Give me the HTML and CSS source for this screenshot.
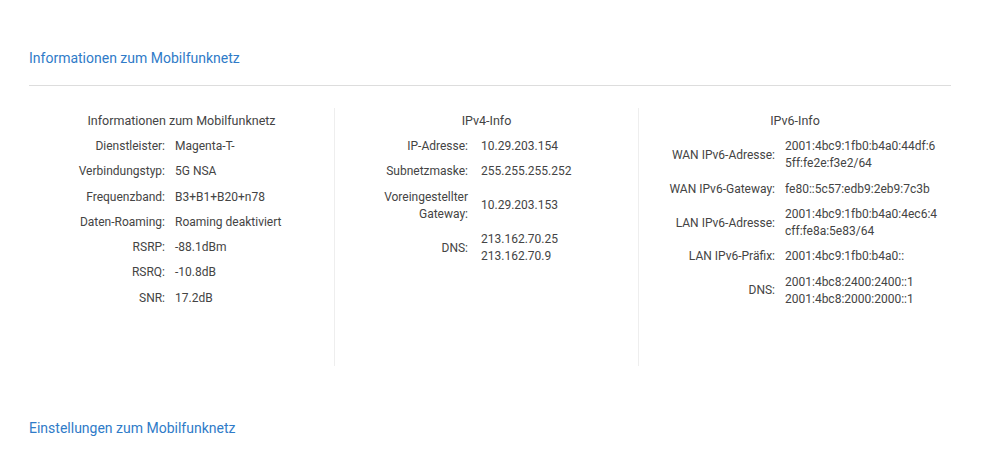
FILE: index.html
```html
<!DOCTYPE html>
<html lang="de">
<head>
    <meta charset="UTF-8" />
    <title>Mobilfunknetz</title>
    <link rel="stylesheet" href="styles.css">
</head>
<body>
    <main class="seite">
        <section class="bereich">
            <h2 class="bereich-titel">Informationen zum Mobilfunknetz</h2>
            <div class="info-raster">
                <div class="info-spalte">
                    <h3>Informationen zum Mobilfunknetz</h3>
                    <dl class="info-liste">
                        <dt>Dienstleister:</dt><dd>Magenta-T-</dd>
                        <dt>Verbindungstyp:</dt><dd>5G NSA</dd>
                        <dt>Frequenzband:</dt><dd>B3+B1+B20+n78</dd>
                        <dt>Daten-Roaming:</dt><dd>Roaming deaktiviert</dd>
                        <dt>RSRP:</dt><dd>-88.1dBm</dd>
                        <dt>RSRQ:</dt><dd>-10.8dB</dd>
                        <dt>SNR:</dt><dd>17.2dB</dd>
                    </dl>
                </div>
                <div class="info-spalte">
                    <h3>IPv4-Info</h3>
                    <dl class="info-liste schmal">
                        <dt>IP-Adresse:</dt><dd>10.29.203.154</dd>
                        <dt>Subnetzmaske:</dt><dd>255.255.255.252</dd>
                        <dt>Voreingestellter Gateway:</dt><dd>10.29.203.153</dd>
                        <dt>DNS:</dt><dd>213.162.70.25<br>213.162.70.9</dd>
                    </dl>
                </div>
                <div class="info-spalte">
                    <h3>IPv6-Info</h3>
                    <dl class="info-liste">
                        <dt>WAN IPv6-Adresse:</dt><dd>2001:4bc9:1fb0:b4a0:44df:65ff:fe2e:f3e2/64</dd>
                        <dt>WAN IPv6-Gateway:</dt><dd>fe80::5c57:edb9:2eb9:7c3b</dd>
                        <dt>LAN IPv6-Adresse:</dt><dd>2001:4bc9:1fb0:b4a0:4ec6:4cff:fe8a:5e83/64</dd>
                        <dt>LAN IPv6-Präfix:</dt><dd>2001:4bc9:1fb0:b4a0::</dd>
                        <dt>DNS:</dt><dd>2001:4bc8:2400:2400::1<br>2001:4bc8:2000:2000::1</dd>
                    </dl>
                </div>
            </div>
        </section>
        <section class="bereich">
            <h2 class="bereich-titel zweiter">Einstellungen zum Mobilfunknetz</h2>
        </section>
    </main>
</body>
</html>
```

FILE: styles.css
```css
body {
    margin: 0;
    font-family: Roboto, Arial, sans-serif;
    color: #444;
    background-color: #fff;
}
.seite {
    padding: 0 49px 0 29px;
}
.bereich-titel {
    margin: 48px 0 0;
    font-size: 14px;
    line-height: 20px;
    font-weight: normal;
    color: #2f7bc8;
    padding-bottom: 17px;
    border-bottom: 1px solid #ddd;
}
.bereich-titel.zweiter {
    margin-top: 52px;
    border-bottom: none;
}
.info-raster {
    display: grid;
    grid-template-columns: 305px 304px 1fr;
    margin-top: 22px;
    height: 258px;
}
.info-spalte {
    padding-top: 4px;
}
.info-spalte + .info-spalte {
    border-left: 1px solid #eee;
}
.info-spalte h3 {
    margin: 0 0 5px;
    font-size: 12.5px;
    line-height: 17px;
    font-weight: normal;
    text-align: center;
}
.info-liste {
    display: grid;
    grid-template-columns: 136px 1fr;
    column-gap: 10px;
    margin: 0;
    padding-right: 9px;
    font-size: 12px;
    line-height: 17.3px;
}
.info-liste dt {
    text-align: right;
    align-self: center;
    padding: 4px 0;
}
.info-liste dd {
    margin: 0;
    padding: 4px 0;
    align-self: center;
    word-break: break-all;
}
.info-liste.schmal dt {
    padding-left: 44px;
    padding-right: 3px;
}
```
